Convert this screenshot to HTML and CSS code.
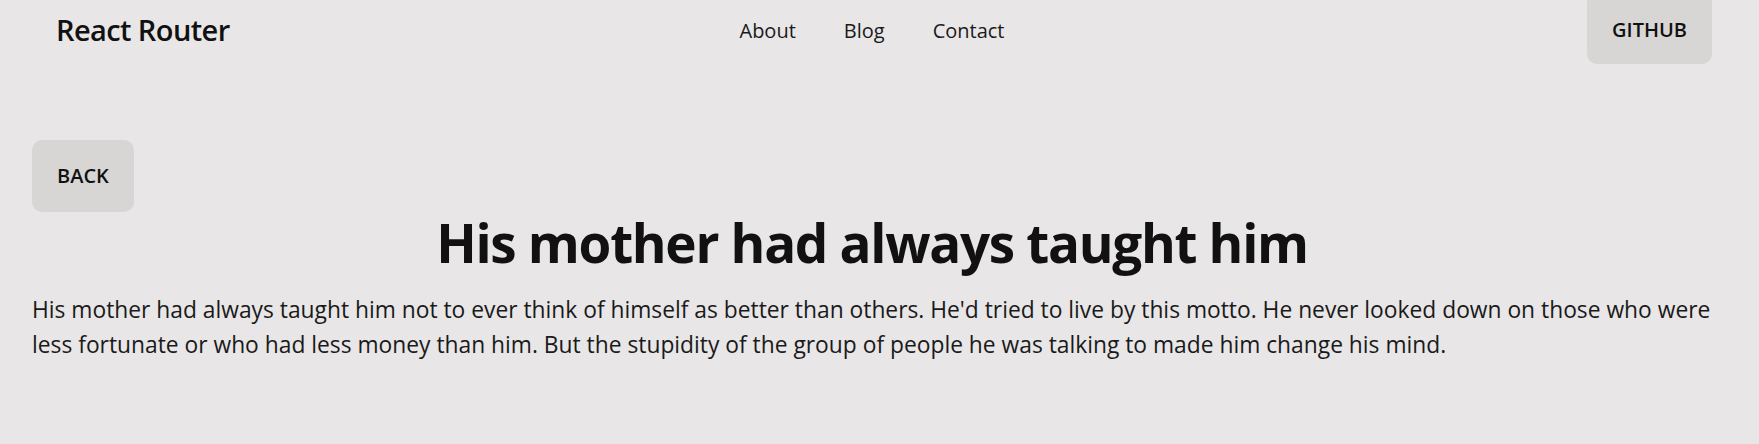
FILE: index.html
```html
<!DOCTYPE html>
<html lang="en">
<head>
<meta charset="utf-8">
<title>React Router</title>
<link rel="stylesheet" href="styles.css">
</head>
<body>
<header class="topbar">
  <a class="logo" href="#">React Router</a>
  <nav class="nav">
    <a class="nav-link" href="#">About</a>
    <a class="nav-link" href="#">Blog</a>
    <a class="nav-link" href="#">Contact</a>
  </nav>
  <a class="btn btn-github" href="#">GITHUB</a>
</header>
<main class="post">
  <div class="post-actions">
    <a class="btn" href="#">BACK</a>
  </div>
  <h1 class="post-title">His mother had always taught him</h1>
  <p class="post-body">His mother had always taught him not to ever think of himself as better than others. He'd tried to live by this motto. He never looked down on those who were less fortunate or who had less money than him. But the stupidity of the group of people he was talking to made him change his mind.</p>
</main>
</body>
</html>
```
FILE: styles.css
```css
* { box-sizing: border-box; }

html, body {
  margin: 0;
  padding: 0;
  background: #e8e6e7;
  color: #111111;
  font-family: "Open Sans", "Noto Sans", sans-serif;
}

a { color: inherit; text-decoration: none; }

.topbar {
  display: grid;
  grid-template-columns: 1fr auto 1fr;
  align-items: center;
  height: 58px;
  padding: 0 47px 0 32px;
}

.logo {
  justify-self: start;
  padding-left: 24px;
  padding-top: 1px;
  font-size: 29px;
  font-weight: 600;
  letter-spacing: -0.6px;
  color: #111111;
}

.nav {
  display: flex;
  gap: 48px;
  padding-top: 2px;
}

.nav-link {
  font-size: 20px;
  color: #1a1a1a;
}

.btn {
  display: inline-block;
  padding: 24px 25px;
  font-size: 20px;
  line-height: 24px;
  font-weight: 600;
  background: #d8d6d5;
  border-radius: 10px;
  color: #111111;
}

.btn-github {
  justify-self: end;
  padding-top: 26px;
  padding-bottom: 22px;
  margin: -8px 0 -6px;
}

.post {
  padding: 82px 47px 0 32px;
}

.post-actions {
  display: flex;
}

.post-title {
  margin: 0;
  text-align: center;
  font-size: 53px;
  line-height: 62px;
  font-weight: 700;
  letter-spacing: -1.3px;
  color: #111111;
}

.post-body {
  margin: 18px -16px 0 0;
  font-size: 22.8px;
  line-height: 35px;
  color: #1a1a1a;
}
```
